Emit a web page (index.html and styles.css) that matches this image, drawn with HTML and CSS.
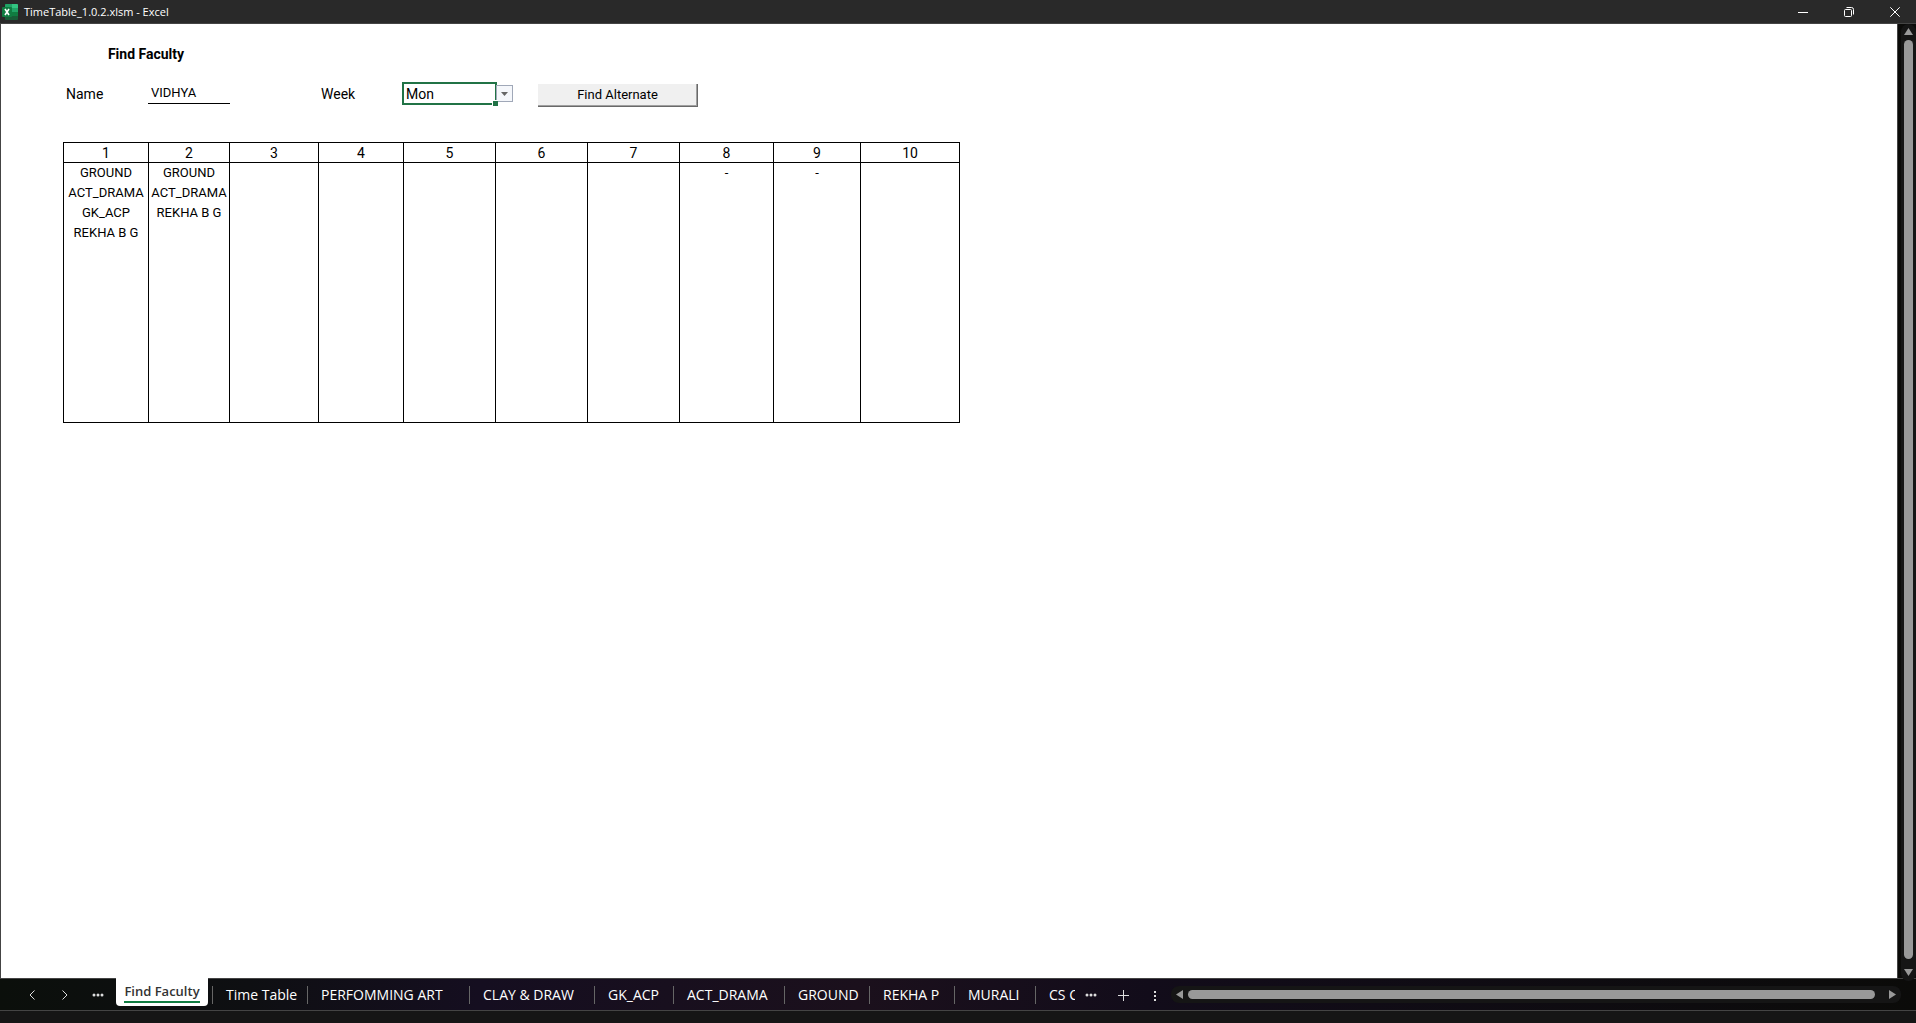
FILE: index.html
```html
<!DOCTYPE html>
<html lang="en">
<head>
<meta charset="utf-8">
<title>TimeTable_1.0.2.xlsm - Excel</title>
<link rel="stylesheet" href="styles.css">
</head>
<body>
<header class="titlebar">
  <svg class="logo" viewBox="0 0 16 16" aria-hidden="true">
    <rect x="3" y="0" width="13" height="16" rx="1" fill="#185c37"/>
    <path d="M4 0h6v4H3V1a1 1 0 0 1 1-1z" fill="#21a366"/>
    <path d="M10 0h5a1 1 0 0 1 1 1v3h-6z" fill="#33c481"/>
    <path d="M3 4h7v4H3z" fill="#107c41"/>
    <path d="M10 4h6v4h-6z" fill="#21a366"/>
    <path d="M10 8h6v4h-6z" fill="#107c41"/>
    <rect x="0" y="3" width="10" height="10" rx="1" fill="#107c41"/>
    <path d="M3 5l4 6M7 5l-4 6" stroke="#fff" stroke-width="1.6"/>
  </svg>
  <h1 class="doc-name">TimeTable_1.0.2.xlsm - Excel</h1>
  <div class="window-controls">
    <button type="button" aria-label="Minimize"><svg viewBox="0 0 10 10"><path d="M0 5.5h10"/></svg></button>
    <button type="button" aria-label="Restore"><svg viewBox="0 0 10 10"><rect x=".5" y="2.5" width="7" height="7" rx="1"/><path d="M2.500 .5h5a2 2 0 0 1 2 2v5"/></svg></button>
    <button type="button" aria-label="Close"><svg viewBox="0 0 10 10"><path d="M.3 .3l9.400 9.400M9.700 .3l-9.400 9.400"/></svg></button>
  </div>
</header>

<div class="workspace">
  <main class="sheet">
    <h2 class="heading">Find Faculty</h2>
    <form class="search">
      <label for="name">Name</label>
      <input class="name" id="name" type="text" value="VIDHYA">
      <label class="week-label" for="week">Week</label>
      <div class="week">
        <select id="week"><option>Mon</option><option>Tue</option><option>Wed</option><option>Thu</option><option>Fri</option></select>
        <span class="fill-handle"></span>
        <svg class="arrow" viewBox="0 0 15 15" aria-hidden="true"><path d="M4 6h7l-3.500 4z"/></svg>
      </div>
      <button class="find" type="button">Find Alternate</button>
    </form>
    <table class="periods">
      <colgroup><col class="w85"><col class="w81"><col class="w89"><col class="w85"><col class="w92"><col class="w92"><col class="w92"><col class="w94"><col class="w87"><col class="w99"></colgroup>
      <thead>
        <tr><th>1</th><th>2</th><th>3</th><th>4</th><th>5</th><th>6</th><th>7</th><th>8</th><th>9</th><th>10</th></tr>
      </thead>
      <tbody>
        <tr>
          <td>GROUND<br>ACT_DRAMA<br>GK_ACP<br>REKHA B G</td>
          <td>GROUND<br>ACT_DRAMA<br>REKHA B G</td>
          <td></td><td></td><td></td><td></td><td></td>
          <td>-</td><td>-</td><td></td>
        </tr>
      </tbody>
    </table>
  </main>
  <div class="scroll vertical">
    <svg viewBox="0 0 9 7"><path d="M4.500 0L9 7H0z"/></svg>
    <div class="thumb"></div>
    <svg viewBox="0 0 9 7"><path d="M0 0h9L4.500 7z"/></svg>
  </div>
</div>

<footer class="bottom">
  <div class="nav">
    <button type="button" aria-label="Previous sheet"><svg viewBox="0 0 12 12"><path d="M8.500 1.500L4 6l4.500 4.500"/></svg></button>
    <button type="button" aria-label="Next sheet"><svg viewBox="0 0 12 12"><path d="M3.500 1.500L8 6l-4.500 4.500"/></svg></button>
    <button type="button" aria-label="More sheets"><svg class="dots" viewBox="0 0 12 12"><circle cx="2" cy="6" r="1.500"/><circle cx="6" cy="6" r="1.500"/><circle cx="10" cy="6" r="1.500"/></svg></button>
  </div>
  <nav class="tabs" aria-label="Sheets">
    <a class="active" href="#"><span>Find Faculty</span></a>
    <a href="#">Time Table</a>
    <a href="#">PERFOMMING ART</a>
    <a href="#">CLAY &amp; DRAW</a>
    <a href="#">GK_ACP</a>
    <a href="#">ACT_DRAMA</a>
    <a href="#">GROUND</a>
    <a href="#">REKHA P</a>
    <a href="#">MURALI</a>
    <a href="#">CS C</a>
  </nav>
  <div class="nav tools">
    <button type="button" aria-label="More sheets"><svg class="dots" viewBox="0 0 12 12"><circle cx="2" cy="6" r="1.500"/><circle cx="6" cy="6" r="1.500"/><circle cx="10" cy="6" r="1.500"/></svg></button>
    <button type="button" aria-label="New sheet"><svg viewBox="0 0 12 12"><path d="M6.500 1v11M1 6.500h11"/></svg></button>
    <button type="button" aria-label="Resize tabs"><svg class="dots" viewBox="0 0 12 12"><rect x="5" y="2" width="2" height="2"/><rect x="5" y="6" width="2" height="2"/><rect x="5" y="10" width="2" height="2"/></svg></button>
  </div>
  <div class="scroll horizontal">
    <svg viewBox="0 0 7 9"><path d="M7 0v9L0 4.500z"/></svg>
    <div class="thumb"></div>
    <svg viewBox="0 0 7 9"><path d="M0 0v9l7-4.500z"/></svg>
  </div>
</footer>
<div class="status"></div>
</body>
</html>
```
FILE: styles.css
```css
* {
  box-sizing: border-box;
}

body {
  margin: 0;
  height: 100vh;
  display: flex;
  flex-direction: column;
  background: #0b0b09;
  color: #000;
  font: 14px/20px Roboto, sans-serif;
  overflow: hidden;
}

button,
input,
select {
  font: inherit;
  color: inherit;
  margin: 0;
  padding: 0;
  border: 0;
  border-radius: 0;
  background: none;
}

svg {
  display: block;
}

/* Title bar */
.titlebar {
  flex: none;
  height: 24px;
  display: flex;
  align-items: center;
  gap: 6px;
  padding-left: 2px;
  background: #292929;
  border-bottom: 1px solid #444;
  color: #fff;
}

.logo {
  width: 16px;
  height: 16px;
}

.doc-name {
  margin: 0;
  font: 11px/16px "Open Sans", sans-serif;
}

.window-controls {
  margin: 0 -2px 0 auto;
  display: flex;
}

.window-controls button {
  width: 46px;
  height: 20px;
  display: grid;
  place-items: center;
}

.window-controls svg {
  width: 10px;
  height: 10px;
  fill: none;
  stroke: #fff;
}

/* Sheet */
.workspace {
  flex: 1;
  min-height: 0;
  display: flex;
}

.sheet {
  flex: 1;
  padding: 20px 0 0 62px;
  background: #fff;
  border: solid #444;
  border-width: 0 1px 0 1px;
}

.heading {
  width: 166px;
  margin: 0 0 16px;
  font-size: 14px;
  line-height: 20px;
  font-weight: 700;
  text-align: center;
}

.search {
  display: grid;
  grid-template-columns: 85px 81px 89px 84px 112px 160px;
  align-items: center;
  height: 24px;
  margin-bottom: 38px;
}

.search label {
  padding-left: 3px;
}

.search .name {
  width: 82px;
  height: 20px;
  padding-left: 3px;
  border-bottom: 1px solid #000;
  font-size: 13px;
}

.search .week-label {
  grid-column: 4;
}

.week {
  position: relative;
  display: flex;
  align-items: center;
}

.week select {
  appearance: none;
  width: 95px;
  height: 23px;
  padding-left: 2px;
  border: 2px solid #217346;
  background: #fff;
}

.week .arrow {
  width: 17px;
  height: 17px;
  margin-left: -1px;
  border: 1px solid #a0a8b8;
  background: #f5f7fb;
  fill: #666;
}

.fill-handle {
  position: absolute;
  left: 90px;
  bottom: -1px;
  width: 6px;
  height: 6px;
  background: #217346;
  border: solid #fff;
  border-width: 1px 0 0 1px;
}

.find {
  width: 160px;
  height: 23px;
  margin: 4px 0 0 24px;
  background: #f0f0f0;
  border: solid #696969;
  border-width: 0 1px 1px 0;
  box-shadow: inset -1px -1px #a0a0a0;
  font-size: 13px;
}

.periods {
  width: 897px;
  table-layout: fixed;
  border-collapse: collapse;
}

.w81 { width: 81px; }
.w85 { width: 85px; }
.w87 { width: 87px; }
.w89 { width: 89px; }
.w92 { width: 92px; }
.w94 { width: 94px; }
.w99 { width: 99px; }

.periods th,
.periods td {
  padding: 0;
  border: 1px solid #000;
  font-weight: 400;
  text-align: center;
  vertical-align: top;
}

.periods th {
  height: 20px;
  padding-top: 2px;
  line-height: 17px;
}

.periods td {
  height: 260px;
  font-size: 13px;
}

/* Scroll bars */
.scroll {
  display: flex;
  align-items: center;
  background: #151515;
  border-radius: 8px;
}

.scroll .thumb {
  flex: 1;
  background: #999;
  border-radius: 5px;
}

.scroll svg {
  flex: none;
  fill: #999;
}

.vertical {
  flex-direction: column;
  gap: 5px;
  width: 15px;
  margin: 0 0 -3px 3px;
  padding: 4px 0 5px;
  z-index: 1;
}

.vertical .thumb {
  width: 9px;
}

.vertical svg {
  width: 9px;
  height: 7px;
}

.vertical svg:last-child {
  margin-top: 5px;
}

.horizontal {
  flex: 1;
  height: 17px;
  gap: 5px;
  margin-right: 15px;
  padding: 0 5px;
}

.horizontal .thumb {
  height: 9px;
}

.horizontal svg {
  width: 7px;
  height: 9px;
}

.horizontal svg:last-child {
  margin-left: 9px;
}

/* Sheet tabs */
.bottom {
  flex: none;
  height: 33px;
  display: flex;
  align-items: center;
  background: linear-gradient(90deg, #0b0f0b 0, #0e0f12 13%, #150e20 25%, #1b101c 45%, #120c1a 60%, #0b0b09 100%);
  border: solid #444;
  border-width: 1px 0;
  color: #fff;
}

.nav {
  display: flex;
  padding-left: 15px;
}

.nav button {
  width: 33px;
  height: 24px;
  display: grid;
  place-items: center;
}

.nav svg {
  width: 12px;
  height: 12px;
  fill: none;
  stroke: #ddd;
}

.nav .dots {
  fill: #ddd;
  stroke: none;
}

.tabs {
  align-self: stretch;
  display: grid;
  grid-template-columns: 96px 95px 162px 125px 79px 111px 85px 85px 81px 40px;
  align-items: center;
  margin-left: 2px;
  font: 14px/18px "Open Sans", sans-serif;
}

.tabs a {
  padding-left: 13px;
  border-left: 1px solid #666;
  color: #fff;
  text-decoration: none;
  white-space: nowrap;
  overflow: hidden;
}

.tabs .active {
  align-self: start;
  justify-self: start;
  width: 92px;
  height: 28px;
  margin-top: -1px;
  padding: 4px 0 0;
  border: 0;
  border-radius: 0 0 4px 4px;
  background: #fff;
  color: #333;
  font-weight: 600;
  font-size: 13px;
  text-align: center;
}

.tabs .active span {
  display: inline-block;
  height: 21px;
  border-bottom: 2px solid #107c41;
}

.tools {
  padding: 0;
}

.tools button {
  width: 32px;
}

.status {
  flex: none;
  height: 12px;
  background: #151515;
}
```
